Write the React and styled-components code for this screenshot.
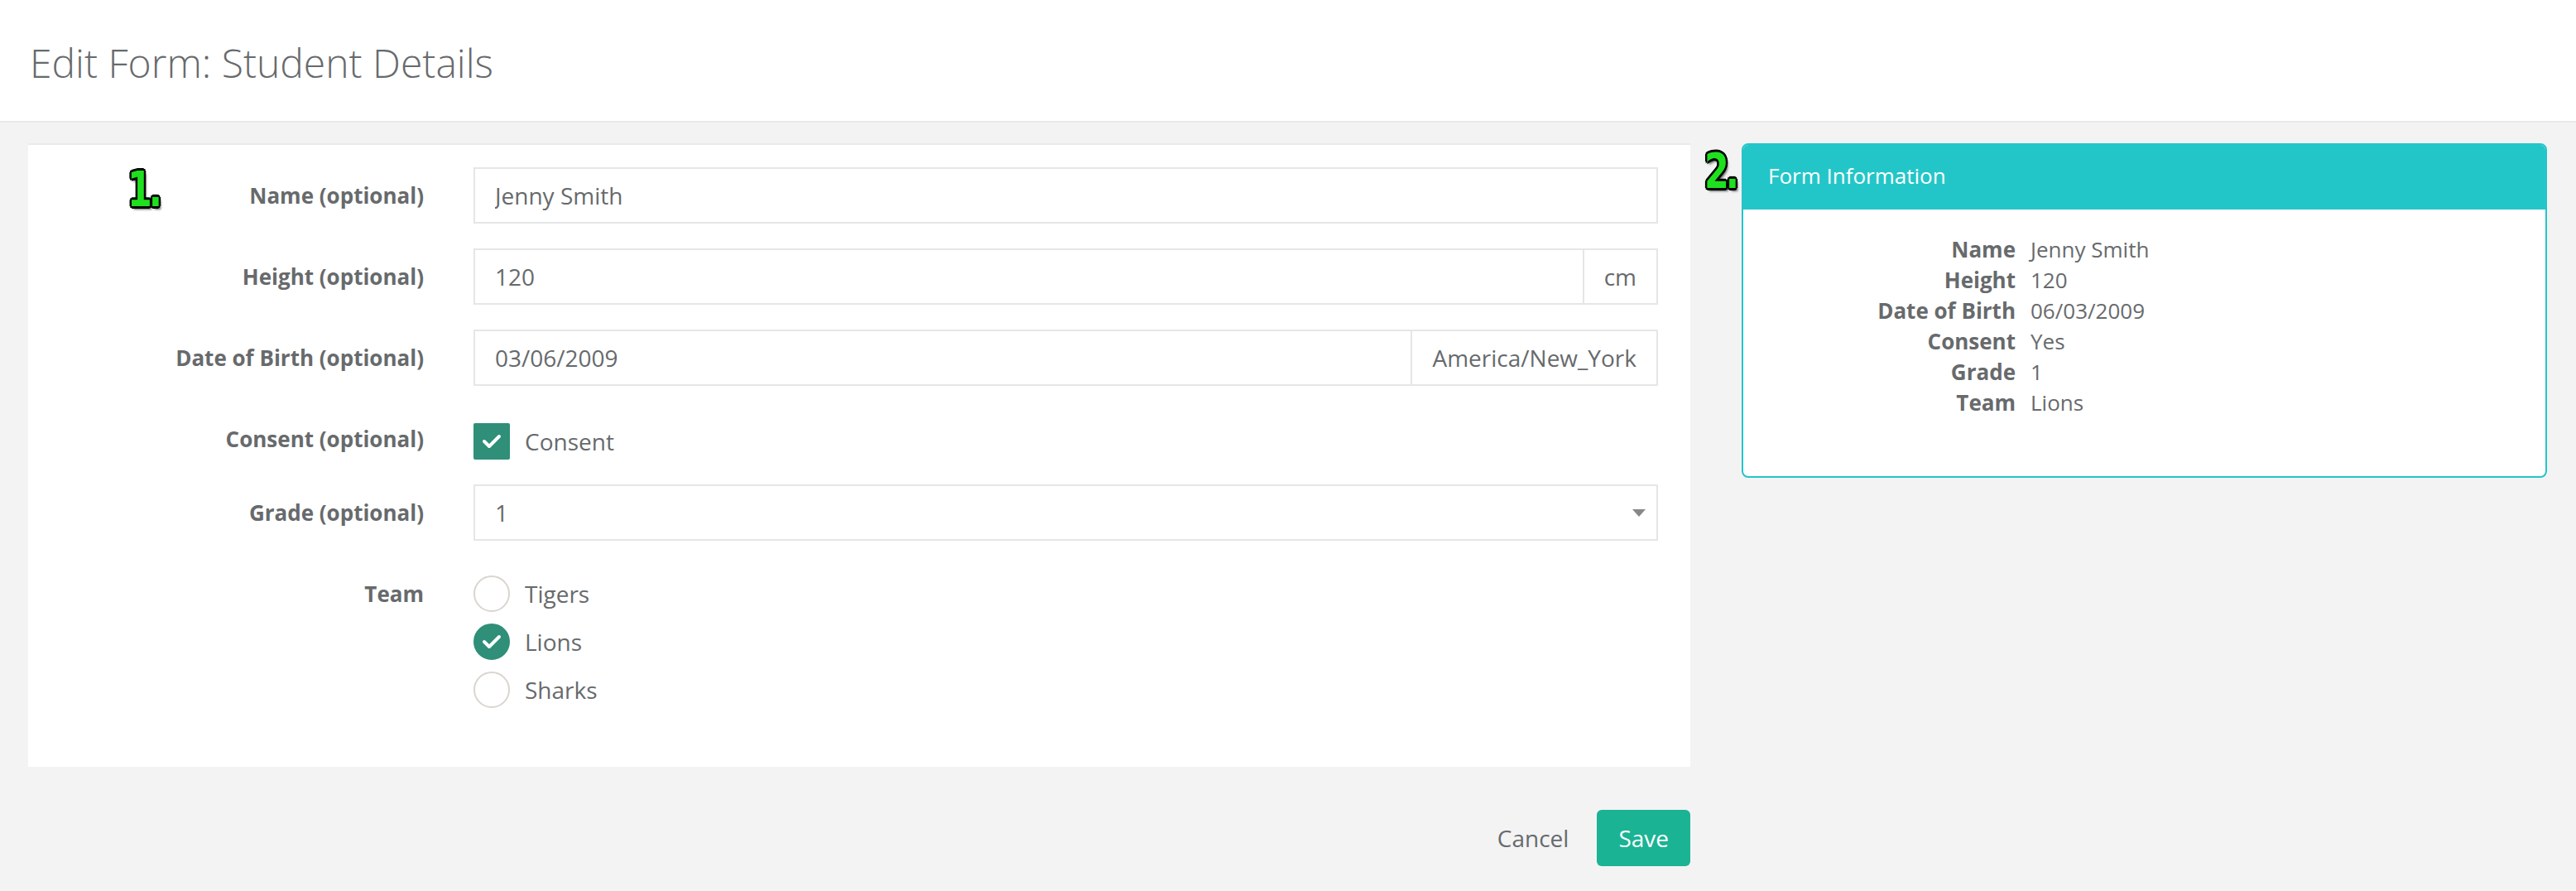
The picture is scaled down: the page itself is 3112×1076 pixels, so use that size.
import styled, { createGlobalStyle } from "styled-components";

const GlobalStyle = createGlobalStyle`
  * {
    box-sizing: border-box;
  }
  body {
    margin: 0;
    background: #f3f3f4;
    font-family: "Open Sans", "Noto Sans", sans-serif;
    color: #676a6c;
  }
`;

const Header = styled.header`
  height: 148px;
  display: flex;
  align-items: center;
  padding: 4px 0 0 36px;
  background: #fff;
  border-bottom: 2px solid #e7eaec;
`;

const Title = styled.h1`
  margin: 0;
  font-size: 48px;
  font-weight: 300;
  color: #676a6c;
`;

const Main = styled.main`
  display: flex;
  align-items: flex-start;
  gap: 62px;
  padding: 25px 35px 40px 34px;
`;

const LeftColumn = styled.div`
  flex: 1;
  display: flex;
  flex-direction: column;
`;

const Card = styled.form`
  position: relative;
  display: flex;
  flex-direction: column;
  gap: 30px;
  padding: 27px 39px 71px 0;
  background: #fff;
  border-top: 2px solid #e7eaec;
`;

const Marker = styled.span`
  position: absolute;
  top: ${({ $top }) => $top}px;
  left: ${({ $left }) => $left}px;
  font-family: "Liberation Sans Narrow", "DejaVu Sans Condensed", "DejaVu Sans", sans-serif;
  font-weight: 700;
  font-size: 58px;
  line-height: 1;
  letter-spacing: -5px;
  color: #1fe01f;
  transform: scaleX(0.82);
  transform-origin: left top;
  text-shadow: 3px 0 0 #000, -3px 0 0 #000, 0 3px 0 #000, 0 -3px 0 #000,
    2px 2px 0 #000, -2px -2px 0 #000, 2px -2px 0 #000, -2px 2px 0 #000,
    3px 4px 3px rgba(0, 0, 0, 0.6);
  z-index: 2;
`;

const FormGroup = styled.div`
  display: grid;
  grid-template-columns: 478px 1fr;
  column-gap: 60px;
`;

const Label = styled.label`
  padding-top: 14px;
  text-align: right;
  font-size: 26px;
  font-weight: 700;
  line-height: 40px;
  color: #676a6c;
`;

const InputGroup = styled.div`
  display: flex;
  height: 68px;
`;

const TextInput = styled.input`
  flex: 1;
  min-width: 0;
  height: 68px;
  padding: 0 24px;
  border: 2px solid #e5e6e7;
  font-family: inherit;
  font-size: 28px;
  color: #676a6c;
  background: #fff;
  outline: none;
`;

const Addon = styled.span`
  display: flex;
  align-items: center;
  padding: 0 24px;
  border: 2px solid #e5e6e7;
  border-left: none;
  font-size: 28px;
  color: #676a6c;
`;

const CheckRow = styled.div`
  display: flex;
  align-items: center;
  gap: 18px;
  padding-top: 15px;
  font-size: 28px;
  line-height: 40px;
`;

const CheckBox = styled.span`
  width: 44px;
  height: 44px;
  display: flex;
  align-items: center;
  justify-content: center;
  background: #2f8f79;
  border-radius: 2px;
`;

const SelectBox = styled.div`
  height: 68px;
  display: flex;
  align-items: center;
  justify-content: space-between;
  padding: 0 13px 0 24px;
  border: 2px solid #e5e6e7;
  font-size: 28px;
`;

const Caret = styled.span`
  width: 0;
  height: 0;
  border-left: 8px solid transparent;
  border-right: 8px solid transparent;
  border-top: 9px solid #888;
`;

const RadioList = styled.div`
  display: flex;
  flex-direction: column;
  gap: 14px;
  padding-top: 12px;
`;

const RadioItem = styled.div`
  display: flex;
  align-items: center;
  gap: 18px;
  font-size: 28px;
  line-height: 40px;
`;

const RadioCircle = styled.span`
  width: 44px;
  height: 44px;
  display: flex;
  align-items: center;
  justify-content: center;
  border-radius: 50%;
  border: 2px solid ${({ $checked }) => ($checked ? "#2f8f79" : "#d9d5d0")};
  background: ${({ $checked }) => ($checked ? "#2f8f79" : "#fff")};
`;

const ButtonRow = styled.div`
  display: flex;
  justify-content: flex-end;
  align-items: center;
  gap: 10px;
  margin-top: 52px;
`;

const CancelButton = styled.button`
  height: 68px;
  padding: 0 24px;
  border: none;
  background: transparent;
  font-family: inherit;
  font-size: 28px;
  color: #676a6c;
  cursor: pointer;
`;

const SaveButton = styled.button`
  height: 68px;
  padding: 0 26px;
  border: none;
  border-radius: 6px;
  background: #1ab394;
  font-family: inherit;
  font-size: 28px;
  color: #fff;
  cursor: pointer;
`;

const Panel = styled.aside`
  position: relative;
  width: 973px;
  flex: 0 0 973px;
  background: #fff;
  border: 2px solid #23c6c8;
  border-radius: 8px;
`;

const PanelHeading = styled.div`
  height: 78px;
  display: flex;
  align-items: center;
  padding: 0 30px 4px;
  background: #23c6c8;
  border-radius: 6px 6px 0 0;
  color: #fff;
  font-size: 26px;
`;

const PanelBody = styled.dl`
  display: grid;
  grid-template-columns: 299px 1fr;
  column-gap: 18px;
  margin: 0;
  padding: 30px 30px 70px;
  font-size: 26px;
  line-height: 37px;
`;

const Term = styled.dt`
  text-align: right;
  font-weight: 700;
`;

const Value = styled.dd`
  margin: 0;
`;

const Check = () => (
  <svg width="24" height="18" viewBox="0 0 24 18">
    <polyline
      points="3,9 9,15 21,3"
      fill="none"
      stroke="#fff"
      strokeWidth="4"
      strokeLinecap="round"
      strokeLinejoin="round"
    />
  </svg>
);

const teams = ["Tigers", "Lions", "Sharks"];

const info = [
  ["Name", "Jenny Smith"],
  ["Height", "120"],
  ["Date of Birth", "06/03/2009"],
  ["Consent", "Yes"],
  ["Grade", "1"],
  ["Team", "Lions"],
];

export default function App() {
  return (
    <>
      <GlobalStyle />
      <Header>
        <Title>Edit Form: Student Details</Title>
      </Header>
      <Main>
        <LeftColumn>
          <Card onSubmit={(e) => e.preventDefault()}>
            <Marker $top={25} $left={120}>1.</Marker>
            <FormGroup>
              <Label>Name (optional)</Label>
              <TextInput defaultValue="Jenny Smith" />
            </FormGroup>
            <FormGroup>
              <Label>Height (optional)</Label>
              <InputGroup>
                <TextInput defaultValue="120" />
                <Addon>cm</Addon>
              </InputGroup>
            </FormGroup>
            <FormGroup>
              <Label>Date of Birth (optional)</Label>
              <InputGroup>
                <TextInput defaultValue="03/06/2009" />
                <Addon>America/New_York</Addon>
              </InputGroup>
            </FormGroup>
            <FormGroup>
              <Label>Consent (optional)</Label>
              <CheckRow>
                <CheckBox>
                  <Check />
                </CheckBox>
                Consent
              </CheckRow>
            </FormGroup>
            <FormGroup>
              <Label>Grade (optional)</Label>
              <SelectBox>
                1
                <Caret />
              </SelectBox>
            </FormGroup>
            <FormGroup>
              <Label>Team</Label>
              <RadioList>
                {teams.map((team) => (
                  <RadioItem key={team}>
                    <RadioCircle $checked={team === "Lions"}>
                      {team === "Lions" && <Check />}
                    </RadioCircle>
                    {team}
                  </RadioItem>
                ))}
              </RadioList>
            </FormGroup>
          </Card>
          <ButtonRow>
            <CancelButton type="button">Cancel</CancelButton>
            <SaveButton type="button">Save</SaveButton>
          </ButtonRow>
        </LeftColumn>
        <Panel>
          <Marker $top={3} $left={-47}>2.</Marker>
          <PanelHeading>Form Information</PanelHeading>
          <PanelBody>
            {info.map(([term, value]) => (
              <>
                <Term key={term + "-t"}>{term}</Term>
                <Value key={term + "-v"}>{value}</Value>
              </>
            ))}
          </PanelBody>
        </Panel>
      </Main>
    </>
  );
}
